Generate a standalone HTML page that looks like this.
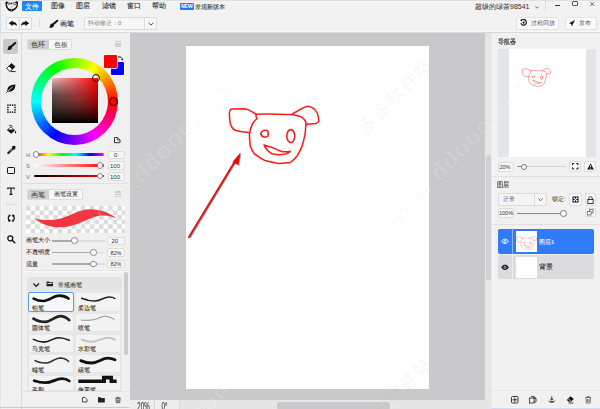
<!DOCTYPE html>
<html><head><meta charset="utf-8">
<style>
*{box-sizing:border-box;margin:0;padding:0}
html,body{width:600px;height:409px;overflow:hidden;background:#f0f0f0;font-family:"Liberation Sans",sans-serif;color:#222}
.a{position:absolute}
.t{position:absolute;font-size:7px;line-height:7px;white-space:nowrap;-webkit-text-stroke:0.08px currentColor}
.box{position:absolute;border:1px solid #dcdcdc;border-radius:2px;background:#f7f7f7}
svg{position:absolute;overflow:visible}
</style></head><body>
<!-- menubar -->
<div class="a" style="left:0;top:0;width:600px;height:33px;background:#f2f2f2;border-bottom:1px solid #d9d9d9"></div><div class="a" style="left:0;top:31px;width:600px;height:1px;background:#f8f8f8"></div>
<div class="a" style="left:0;top:0;width:600px;height:1px;background:#e2e2e2"></div>
<div class="a" style="left:22px;top:1px;width:20px;height:10px;background:#1d86f2;border-radius:1px"></div>
<div class="t" style="left:25px;top:2.5px;color:#fff">文件</div>
<div class="t" style="left:51px;top:2px">图像</div>
<div class="t" style="left:76px;top:2px">图层</div>
<div class="t" style="left:102px;top:2px">滤镜</div>
<div class="t" style="left:127px;top:2px">窗口</div>
<div class="t" style="left:152px;top:2px">帮助</div>
<div class="a" style="left:179.5px;top:3px;width:14.5px;height:7px;background:#1d7ff5;border-radius:1px"></div>
<div class="t" style="left:181px;top:4px;font-size:5px;line-height:5px;color:#fff;font-weight:bold;-webkit-text-stroke:0">NEW</div>
<div class="t" style="left:195px;top:3.9px;font-size:6px;line-height:6px;color:#333;-webkit-text-stroke:0.08px #333">发现新版本</div>
<div class="t" style="left:475px;top:3px;color:#333;-webkit-text-stroke:0.05px">超级的绿茶98541</div>
<!-- toolbar -->
<div class="box" style="left:6px;top:17px;width:25.5px;height:13px"></div>
<div class="a" style="left:18.5px;top:18px;width:1px;height:10.5px;background:#dcdcdc"></div>
<div class="a" style="left:38.5px;top:19px;width:1px;height:8px;background:#d8d8d8"></div>
<div class="t" style="left:60px;top:19.7px;-webkit-text-stroke:0.12px #222">画笔</div>
<div class="box" style="left:83.5px;top:17px;width:73px;height:12.5px"></div>
<div class="a" style="left:144px;top:18px;width:1px;height:10.5px;background:#dcdcdc"></div>
<div class="t" style="left:88px;top:20.3px;color:#777;font-size:6px;line-height:6px;-webkit-text-stroke:0">抖动修正：0</div>
<div class="box" style="left:516px;top:17.2px;width:43.2px;height:12.4px;background:#fafafa;border-color:#e2e2e2"></div>
<div class="t" style="left:530.8px;top:20.3px;color:#555;font-size:6px;line-height:6px;-webkit-text-stroke:0">过程回放</div>
<div class="box" style="left:564.7px;top:17.2px;width:32px;height:12.4px;background:#fafafa;border-color:#e2e2e2"></div>
<div class="t" style="left:578.6px;top:20.3px;color:#555;font-size:6px;line-height:6px;-webkit-text-stroke:0">发布</div>


<div class="a" style="left:0;top:0;width:1.2px;height:33px;background:linear-gradient(#cfe0ea 0%,#d8e4ea 40%,#f0c8a0 48%,#cfe0ea 55%,#cfe0ea 100%)"></div>
<!-- logo -->
<svg style="left:0;top:0" width="22" height="14" viewBox="0 0 22 14">
<path d="M6.2,2.8 C5.9,6.8 8,10 11.4,11.2 C14.9,10 17.6,6.8 17.4,2.6" stroke="#111" stroke-width="1.3" fill="none"/>
<path d="M6.8,6.2 C7.8,9.6 10,10.8 11.4,11 C13,10.8 15.6,9.6 16.6,6 C15.2,8.4 13.2,9.1 11.4,9.1 C9.5,9.1 7.9,8.3 6.8,6.2Z" fill="#111"/>
<path d="M6.2,3 C7.5,2.6 9,2.7 10.2,3.4 M12.5,3.3 C13.5,2.8 14.8,2.5 15.6,2.6" stroke="#111" stroke-width="0.8" fill="none"/>
<path d="M7.8,4.5 C8.5,4 9.5,4.3 10,4.6" stroke="#111" stroke-width="0.7" fill="none"/>
<circle cx="6.7" cy="2.6" r="1.2" fill="#111"/><circle cx="11.3" cy="3.4" r="0.95" fill="#111"/><circle cx="16.6" cy="2.4" r="1.2" fill="#111"/>
<path d="M13.6,4.6 C14.6,4.3 15.6,4.6 16.2,5.2" stroke="#222" stroke-width="0.8" fill="none"/>
<path d="M11.4,5.4 L11.4,11.6 M11.4,7.4 L13.8,5.2" stroke="#bbb" stroke-width="0.8" fill="none"/>
</svg>
<!-- undo / redo -->
<svg style="left:9px;top:20.5px" width="8" height="5" viewBox="0 0 8 5"><path d="M-0.2,2.2 L3.6,-0.5 L3.6,0.8 C6,0.8 8,2.2 8,5.2 C7,3.9 5.8,3.6 3.6,3.6 L3.6,4.9 Z" fill="#111"/></svg>
<svg style="left:20.5px;top:20.5px" width="8" height="5" viewBox="0 0 8 5"><path d="M8.2,2.2 L4.4,-0.5 L4.4,0.8 C2,0.8 0,2.2 0,5.2 C1,3.9 2.2,3.6 4.4,3.6 L4.4,4.9 Z" fill="#111"/></svg>
<!-- toolbar brush -->
<svg style="left:48.5px;top:19.5px" width="9" height="8" viewBox="0 0 9 8"><path d="M8.3,0.7 L4.4,4.1" stroke="#111" stroke-width="2" stroke-linecap="round"/><path d="M3.6,3.5 C2,3.3 1,4.4 1.1,5.8 C1,6.6 0.6,7.2 0,7.6 C2.3,8.1 4.6,7.3 5.2,5.2 Z" fill="#111"/></svg>
<!-- chevron in toolbar select -->
<svg style="left:147.5px;top:21.5px" width="6" height="4" viewBox="0 0 6 4"><path d="M0.5,0.8 L3,3 L5.5,0.8" stroke="#444" stroke-width="0.9" fill="none"/></svg>
<!-- user chevron -->
<svg style="left:534.5px;top:5.5px" width="4" height="3" viewBox="0 0 4 3"><path d="M0.3,0.5 L2,2.2 L3.7,0.5" stroke="#555" stroke-width="0.8" fill="none"/></svg>
<div class="a" style="left:545px;top:0;width:1px;height:11px;background:#dcdcdc"></div>
<!-- window controls -->
<div class="a" style="left:555.2px;top:4.6px;width:5px;height:1.2px;background:#333"></div>
<div class="a" style="left:572.2px;top:0.8px;width:5.8px;height:4.8px;border:0.9px solid #555;border-top-width:1.6px;border-radius:1px"></div>
<svg style="left:590px;top:1.6px" width="4.5" height="4.2" viewBox="0 0 5 5"><path d="M0.3,0.3 L4.7,4.7 M4.7,0.3 L0.3,4.7" stroke="#333" stroke-width="0.9"/></svg>
<!-- replay icon -->
<svg style="left:519.5px;top:19.2px" width="7" height="7" viewBox="0 0 7 7"><path d="M2,1 A2.8,2.8 0 1 1 0.9,4.2" stroke="#111" stroke-width="1.1" fill="none"/><path d="M0.2,0.4 L2.8,0.6 L1.2,2.6Z" fill="#111"/><circle cx="3.6" cy="3.6" r="1.1" fill="#111"/></svg>
<!-- publish icon -->
<svg style="left:569.2px;top:19.8px" width="6" height="6.5" viewBox="0 0 6 6.5"><path d="M6,0 L0,3.3 L2.3,3.9 L2.8,6.5 Z" fill="#111"/></svg>

<!-- left tool column -->
<div class="a" style="left:0;top:33px;width:21.5px;height:376px;background:#f0f0f0;border-right:1px solid #dcdcdc"></div>
<div class="a" style="left:0;top:33px;width:1px;height:376px;background:#e2e2e2"></div><div class="a" style="left:1px;top:33px;width:1px;height:376px;background:#f6f6f6"></div>
<div class="a" style="left:3.3px;top:39px;width:14.8px;height:15.3px;background:#c9c9c9;border-radius:2px"></div>
<div class="a" style="left:4.5px;top:204px;width:12px;height:1px;background:#dcdcdc"></div>
<svg style="left:6.7px;top:42.3px" width="9" height="8.5" viewBox="0 0 9 8"><path d="M8.3,0.7 L4.4,4.1" stroke="#111" stroke-width="2" stroke-linecap="round"/><path d="M3.6,3.5 C2,3.3 1,4.4 1.1,5.8 C1,6.6 0.6,7.2 0,7.6 C2.3,8.1 4.6,7.3 5.2,5.2 Z" fill="#111"/></svg>
<!-- eraser -->
<svg style="left:6px;top:63px" width="10" height="9.2" viewBox="0 0 10 9.2"><path d="M3,3 L5.5,0.5 L9,3.6 L6.4,6.2Z" fill="#111" stroke="#111" stroke-width="0.8" stroke-linejoin="round"/><path d="M0.7,5.4 L3,3 L6.4,6.2 L4,8.5Z" fill="#fff" stroke="#111" stroke-width="0.9" stroke-linejoin="round"/><path d="M4.6,8.6 L9.6,8.6" stroke="#111" stroke-width="0.9"/></svg>
<!-- leaf -->
<svg style="left:6.2px;top:83.5px" width="10" height="9" viewBox="0 0 10 9"><path d="M1.6,7.6 C0.4,3.8 3.6,0.6 9.4,0.6 C9.6,5.6 6,8.8 1.6,7.6Z" fill="#111"/><path d="M0.4,8.6 L6.6,2.8" stroke="#fff" stroke-width="0.8"/><path d="M0.2,8.8 L1.8,7.2" stroke="#111" stroke-width="1"/></svg>
<!-- selection -->
<svg style="left:6.5px;top:103.7px" width="9" height="9.5" viewBox="0 0 9 9.5"><g fill="#111"><rect x="0.2" y="0.4" width="1.45" height="1.45"/><rect x="0.2" y="2.75" width="1.45" height="1.45"/><rect x="0.2" y="5.1" width="1.45" height="1.45"/><rect x="0.2" y="7.45" width="1.45" height="1.45"/><rect x="2.55" y="0.4" width="1.45" height="1.45"/><rect x="2.55" y="7.45" width="1.45" height="1.45"/><rect x="4.9" y="0.4" width="1.45" height="1.45"/><rect x="4.9" y="7.45" width="1.45" height="1.45"/><rect x="7.25" y="0.4" width="1.45" height="1.45"/><rect x="7.25" y="2.75" width="1.45" height="1.45"/><rect x="7.25" y="5.1" width="1.45" height="1.45"/><rect x="7.25" y="7.45" width="1.45" height="1.45"/></g></svg>
<!-- bucket -->
<svg style="left:6px;top:124.5px" width="10.5" height="9" viewBox="0 0 10.5 9"><path d="M3.2,0.8 C4,0 5.2,0.3 6,1.2 L6.5,1.8" stroke="#111" stroke-width="0.9" fill="none"/><path d="M4.8,1.6 L9,5.3 L5.2,8.8 L0.9,5 Z" fill="#111"/><path d="M2.2,4.5 L7.5,4.5 L4.9,2.2Z" fill="#fff"/><path d="M9.3,5.5 C10.3,6.5 10.5,7.6 9.8,8.3 C9.2,8.6 8.7,8 9,7.2Z" fill="#111"/></svg>
<!-- eyedropper -->
<svg style="left:6.5px;top:145.2px" width="9" height="9" viewBox="0 0 9 9"><circle cx="7.2" cy="2.1" r="1.35" fill="#111"/><path d="M5.2,1.5 L8,4.3" stroke="#111" stroke-width="1.3"/><path d="M6.2,3.4 L1.3,8.1" stroke="#111" stroke-width="2.1" stroke-linecap="round"/><path d="M5.2,4.4 L3,6.6" stroke="#fff" stroke-width="0.7"/></svg>
<!-- rectangle -->
<div class="a" style="left:7.3px;top:166.6px;width:7.8px;height:7.8px;border:1.4px solid #111;border-radius:1.2px"></div>
<!-- text T -->
<svg style="left:7px;top:187px" width="8" height="8" viewBox="0 0 8 8"><path d="M0.5,1 L7.5,1 M4,1 L4,7.3 M2.5,7.3 L5.5,7.3 M0.8,0.4 L0.8,2.2 M7.2,0.4 L7.2,2.2" stroke="#111" stroke-width="1.2" fill="none"/></svg>
<!-- rotate -->
<svg style="left:6.7px;top:213.8px" width="8.5" height="8.2" viewBox="0 0 8.5 8.2"><path d="M2.2,6.4 C0.8,5 0.9,2.6 2.6,1.5" stroke="#111" stroke-width="1.2" fill="none"/><path d="M6.3,1.8 C7.7,3.2 7.6,5.6 5.9,6.7" stroke="#111" stroke-width="1.2" fill="none"/><path d="M1.4,0.4 L4,0.9 L2.4,3 Z M7.1,7.8 L4.5,7.3 L6.1,5.2 Z" fill="#111"/><circle cx="2.3" cy="6.6" r="1.2" fill="#111"/><circle cx="6.2" cy="1.6" r="1.2" fill="#111"/></svg>
<!-- zoom -->
<svg style="left:6.7px;top:234.6px" width="8.5" height="8.5" viewBox="0 0 8.5 8.5"><circle cx="3.3" cy="3.3" r="2.5" stroke="#111" stroke-width="1.25" fill="none"/><path d="M5.2,5.2 L7.8,7.8" stroke="#111" stroke-width="1.4" stroke-linecap="round"/></svg>


<!-- left panel -->
<div class="a" style="left:21.5px;top:33px;width:108.5px;height:376px;background:#f0f0f0"></div>
<div class="box" style="left:27px;top:38.5px;width:44.5px;height:11.5px;background:#f7f7f7"></div>
<div class="a" style="left:28px;top:39.5px;width:21px;height:9.5px;background:#d0d0d0"></div>
<div class="t" style="left:31.3px;top:40.8px;color:#333;-webkit-text-stroke:0.05px #333">色环</div>
<div class="t" style="left:53.5px;top:40.8px;color:#555;-webkit-text-stroke:0.03px #555">色板</div>
<!-- wheel -->
<div class="a" style="left:31px;top:58px;width:87px;height:87px;border-radius:50%;background:conic-gradient(from 90deg,#f00,#f0f,#00f,#0ff,#0f0,#ff0,#f00)"></div>
<div class="a" style="left:41px;top:68px;width:67px;height:67px;border-radius:50%;background:#f0f0f0"></div>
<div class="a" style="left:51.5px;top:77.5px;width:46px;height:45.5px;background:linear-gradient(to bottom,rgba(0,0,0,0) 0%,rgba(0,0,0,0.17) 25%,rgba(0,0,0,0.35) 50%,rgba(0,0,0,0.65) 75%,#000 100%),linear-gradient(to right,#f0c0c0,#f00)"></div>
<div class="a" style="left:51.5px;top:77.5px;width:46px;height:45.5px;background:linear-gradient(to right,rgba(0,0,0,0.5),rgba(0,0,0,0.1) 70%,transparent);-webkit-mask-image:linear-gradient(to bottom,transparent,#000 40%)"></div>
<div class="a" style="left:108.5px;top:96.5px;width:9px;height:9px;border-radius:50%;border:1px solid #111;background:#f00"></div>
<div class="a" style="left:92px;top:73.5px;width:8px;height:8px;border-radius:50%;border:1px solid #111"></div>
<div class="a" style="left:110.8px;top:62.2px;width:13.3px;height:12.8px;background:#0000ff;border-radius:1px;box-shadow:0 0 0 0.7px #fff"></div>
<div class="a" style="left:104.1px;top:55.3px;width:12.8px;height:12.5px;background:#f00;border-radius:1px;box-shadow:0 0 0 0.7px #fff"></div>

<svg style="left:117.8px;top:56.3px" width="5.5" height="5" viewBox="0 0 5.5 5"><path d="M0.8,1 C2.5,0.6 4,1.5 4.3,3.3" stroke="#111" stroke-width="0.9" fill="none"/><path d="M0,0.3 L1.6,0.4 L0.7,1.8Z M3.2,3 L5.3,3 L4.3,4.8Z" fill="#111"/></svg>
<div class="a" style="left:115.3px;top:40.8px;width:6.2px;height:1.5px;background:#cfcfcf"></div>
<div class="a" style="left:115.3px;top:43px;width:6.2px;height:1.5px;background:#cfcfcf"></div>
<div class="a" style="left:115.3px;top:45.3px;width:6.2px;height:1.5px;background:#cfcfcf"></div>
<div class="a" style="left:115.3px;top:191.3px;width:6.2px;height:1.4px;background:#cfcfcf"></div>
<div class="a" style="left:115.3px;top:193.5px;width:6.2px;height:1.4px;background:#cfcfcf"></div>
<div class="a" style="left:115.3px;top:195.7px;width:6.2px;height:1.4px;background:#cfcfcf"></div>
<svg style="left:114.4px;top:136.8px" width="6.5" height="6.2" viewBox="0 0 6.5 6.2"><path d="M0.5,0.5 L3.6,0.5 L6,2.9 L6,5.7 L0.5,5.7Z" stroke="#222" stroke-width="0.9" fill="none" stroke-linejoin="round"/><path d="M3.4,0.6 L3.4,3 L5.9,3" stroke="#222" stroke-width="0.7" fill="none"/></svg>
<!-- HSV sliders -->
<div class="t" style="left:26px;top:151.5px;font-size:6px;color:#777;-webkit-text-stroke:0">H</div>
<div class="t" style="left:26px;top:162.5px;font-size:6px;color:#777;-webkit-text-stroke:0">S</div>
<div class="t" style="left:26px;top:173.5px;font-size:6px;color:#777;-webkit-text-stroke:0">V</div>
<div class="a" style="left:34px;top:153px;width:70px;height:2.9px;border-radius:2px;background:linear-gradient(to right,#f00,#ff0,#0f0,#0ff,#00f,#f0f)"></div>
<div class="a" style="left:34px;top:164px;width:70px;height:2.9px;border-radius:2px;background:linear-gradient(to right,#fff,#f00)"></div>
<div class="a" style="left:34px;top:174.5px;width:70px;height:2.9px;border-radius:2px;background:linear-gradient(to right,#000,#f00)"></div>
<div class="a" style="left:33px;top:151.2px;width:6.4px;height:6.4px;border-radius:50%;background:#fff;border:1px solid #888"></div>
<div class="a" style="left:96.5px;top:162.3px;width:6.4px;height:6.4px;border-radius:50%;background:#fff;border:1px solid #888"></div>
<div class="a" style="left:96.5px;top:172.7px;width:6.4px;height:6.4px;border-radius:50%;background:#fff;border:1px solid #888"></div>
<div class="box" style="left:107.5px;top:150.5px;width:17px;height:8.5px"></div>
<div class="box" style="left:107.5px;top:161px;width:17px;height:8.5px"></div>
<div class="box" style="left:107.5px;top:172px;width:17px;height:8.5px"></div>
<div class="t" style="left:114px;top:152px;font-size:6px;line-height:6px;color:#333;-webkit-text-stroke:0">0</div>
<div class="t" style="left:110px;top:162.5px;font-size:6px;line-height:6px;color:#333;-webkit-text-stroke:0">100</div>
<div class="t" style="left:110px;top:173.5px;font-size:6px;line-height:6px;color:#333;-webkit-text-stroke:0">100</div>
<div class="a" style="left:21.5px;top:183px;width:106px;height:1px;background:#e0e0e0"></div>
<!-- brush tabs -->
<div class="box" style="left:27px;top:188.5px;width:55.5px;height:11.5px;background:#f7f7f7"></div>
<div class="a" style="left:28px;top:189.5px;width:21px;height:9.5px;background:#d0d0d0"></div>
<div class="t" style="left:31.3px;top:190.8px;color:#333;-webkit-text-stroke:0.05px #333">画笔</div>
<div class="t" style="left:53.5px;top:190.8px;color:#444;font-size:6px;line-height:7px;-webkit-text-stroke:0.05px #444">画笔设置</div>
<!-- checker -->
<div class="a" style="left:25.7px;top:205.5px;width:99px;height:27.4px;background-color:#fff;background-image:conic-gradient(#fff 25%,#dcdcdc 25%,#dcdcdc 50%,#fff 50%,#fff 75%,#dcdcdc 75%);background-size:9.14px 9.14px"></div>

<svg style="left:0;top:0" width="600" height="409" viewBox="0 0 600 409">
<path d="M34.3,218.5 C45,220.5 52,220.8 62,218.2 C72,215 80,209.5 90,209.3 C100,209.1 110,213 116.8,218.6 C110,215.8 104,214.8 98,216 C88,218.5 80,224 68,226.5 C55,229 44,226 34.3,218.5 Z" fill="#f23640"/>
</svg>
<div class="t" style="left:26px;top:237.4px;font-size:6.2px;line-height:6.2px;color:#333;-webkit-text-stroke:0.08px #333">画笔大小</div>
<div class="t" style="left:26px;top:249px;font-size:6.2px;line-height:6.2px;color:#333;-webkit-text-stroke:0.08px #333">不透明度</div>
<div class="t" style="left:26px;top:261.0px;font-size:6.2px;line-height:6.2px;color:#333;-webkit-text-stroke:0.08px #333">流量</div>
<div class="a" style="left:51.5px;top:240px;width:53.5px;height:1.5px;background:linear-gradient(to right,#aaa 42%,#ddd 42%)"></div>
<div class="a" style="left:51.5px;top:251.5px;width:53.5px;height:1.5px;background:linear-gradient(to right,#aaa 78%,#ddd 78%)"></div>
<div class="a" style="left:51.5px;top:263px;width:53.5px;height:1.5px;background:linear-gradient(to right,#aaa 78%,#ddd 78%)"></div>
<div class="a" style="left:71px;top:237.2px;width:6.5px;height:6.5px;border-radius:50%;background:#fff;border:1px solid #888"></div>
<div class="a" style="left:90px;top:249px;width:6.5px;height:6.5px;border-radius:50%;background:#fff;border:1px solid #888"></div>
<div class="a" style="left:90px;top:260.5px;width:6.5px;height:6.5px;border-radius:50%;background:#fff;border:1px solid #888"></div>
<div class="box" style="left:107px;top:236.5px;width:17.5px;height:8.5px"></div>
<div class="box" style="left:107px;top:248px;width:17.5px;height:8.5px"></div>
<div class="box" style="left:107px;top:259.5px;width:17.5px;height:8.5px"></div>
<div class="t" style="left:111.5px;top:238px;font-size:6px;line-height:6px;color:#333;-webkit-text-stroke:0">20</div>
<div class="t" style="left:110.5px;top:249.5px;font-size:5.5px;line-height:6px;color:#333;-webkit-text-stroke:0">82%</div>
<div class="t" style="left:110.5px;top:261px;font-size:5.5px;line-height:6px;color:#333;-webkit-text-stroke:0">82%</div>
<div class="a" style="left:21.5px;top:270px;width:106px;height:1px;background:#e4e4e4"></div><div class="a" style="left:21.5px;top:271px;width:106px;height:1px;background:#f8f8f8"></div>


<!-- brush library -->
<div class="a" style="left:21.5px;top:271px;width:108.5px;height:120px;overflow:hidden">
 <div class="a" style="left:5.4px;top:6.2px;width:95.1px;height:14px;background:#e4e4e4;border-radius:2px 2px 0 0"></div>
 <div class="a" style="left:5.4px;top:20.2px;width:95.1px;height:110px;background:#e8e8e8"></div>
</div>
<svg style="left:32.7px;top:282.5px" width="6.5" height="4" viewBox="0 0 6.5 4"><path d="M0.5,0.5 L3.25,3.3 L6,0.5" stroke="#111" stroke-width="1.2" fill="none"/></svg>
<svg style="left:46.2px;top:281.3px" width="7.5" height="5.8" viewBox="0 0 7.5 5.8"><path d="M0.5,0.5 L2.8,0.5 L3.5,1.3 L7,1.3 L7,5.3 L0.5,5.3Z" fill="#222"/><path d="M1.3,2.5 L6.2,2.5" stroke="#fff" stroke-width="0.8"/></svg>
<div class="t" style="left:58px;top:281.7px;font-size:6.1px;line-height:6.1px;color:#333;-webkit-text-stroke:0.05px #333">常规画笔</div>
<div class="a" style="left:28.3px;top:292.4px;width:46px;height:19.3px;border:1px solid #5b9af0;background:#f6f8fc;border-radius:2px;overflow:hidden"></div>
<div class="t" style="left:31.8px;top:304.7px;font-size:6px;line-height:6px;color:#333;-webkit-text-stroke:0.1px #333">铅笔</div>
<div class="a" style="left:74.9px;top:292.4px;width:46px;height:19.3px;border:1px solid #e6e6e6;background:#f3f3f3;border-radius:2px;overflow:hidden"></div>
<div class="t" style="left:78.2px;top:304.7px;font-size:6px;line-height:6px;color:#333;-webkit-text-stroke:0.1px #333">柔边笔</div>
<div class="a" style="left:28.3px;top:313px;width:46px;height:19.3px;border:1px solid #e6e6e6;background:#f3f3f3;border-radius:2px;overflow:hidden"></div>
<div class="t" style="left:31.8px;top:325.3px;font-size:6px;line-height:6px;color:#333;-webkit-text-stroke:0.1px #333">圆体笔</div>
<div class="a" style="left:74.9px;top:313px;width:46px;height:19.3px;border:1px solid #e6e6e6;background:#f3f3f3;border-radius:2px;overflow:hidden"></div>
<div class="t" style="left:78.2px;top:325.3px;font-size:6px;line-height:6px;color:#333;-webkit-text-stroke:0.1px #333">喷笔</div>
<div class="a" style="left:28.3px;top:333.5px;width:46px;height:19.3px;border:1px solid #e6e6e6;background:#f3f3f3;border-radius:2px;overflow:hidden"></div>
<div class="t" style="left:31.8px;top:345.8px;font-size:6px;line-height:6px;color:#333;-webkit-text-stroke:0.1px #333">马克笔</div>
<div class="a" style="left:74.9px;top:333.5px;width:46px;height:19.3px;border:1px solid #e6e6e6;background:#f3f3f3;border-radius:2px;overflow:hidden"></div>
<div class="t" style="left:78.2px;top:345.8px;font-size:6px;line-height:6px;color:#333;-webkit-text-stroke:0.1px #333">水彩笔</div>
<div class="a" style="left:28.3px;top:354.2px;width:46px;height:19.3px;border:1px solid #e6e6e6;background:#f3f3f3;border-radius:2px;overflow:hidden"></div>
<div class="t" style="left:31.8px;top:366.5px;font-size:6px;line-height:6px;color:#333;-webkit-text-stroke:0.1px #333">蜡笔</div>
<div class="a" style="left:74.9px;top:354.2px;width:46px;height:19.3px;border:1px solid #e6e6e6;background:#f3f3f3;border-radius:2px;overflow:hidden"></div>
<div class="t" style="left:78.2px;top:366.5px;font-size:6px;line-height:6px;color:#333;-webkit-text-stroke:0.1px #333">碳笔</div>
<div class="a" style="left:28.3px;top:374.9px;width:46px;height:16.1px;border:1px solid #e6e6e6;background:#f3f3f3;border-radius:2px;overflow:hidden"></div>
<div class="t" style="left:31.8px;top:387.2px;font-size:6px;line-height:6px;color:#333;-webkit-text-stroke:0.1px #333">毛刷</div>
<div class="a" style="left:74.9px;top:374.9px;width:46px;height:16.1px;border:1px solid #e6e6e6;background:#f3f3f3;border-radius:2px;overflow:hidden"></div>
<div class="t" style="left:78.2px;top:387.2px;font-size:6px;line-height:6px;color:#333;-webkit-text-stroke:0.1px #333">像素笔</div>
<svg style="left:0;top:0" width="600" height="409" viewBox="0 0 600 409">
<defs><clipPath id="libclip"><rect x="21.5" y="271" width="108.5" height="120"/></clipPath></defs>
<g clip-path="url(#libclip)" fill="none" stroke-linecap="round">
<path d="M33.6,298.6 C37,300.5 40,301 43.6,301 C49,301 53,295.8 58.7,295.6 C63,295.5 66.5,297 68.5,298.6" stroke="#111" stroke-width="2.6"/>
<path d="M81.6,298.2 C86,300 90,301.1 94.6,301.1 C100,301.1 104,296.9 109.3,296.9 C112,296.9 113.5,297.5 115,298.5" stroke="#222" stroke-width="1.5"/>
<path d="M33.4,318.6 C37,321 41,321.9 45.6,321.9 C51,321.9 55,316.1 60.3,316.1 C64,316.1 67,318 69.3,320.2" stroke="#222" stroke-width="2.6"/>
<path d="M81.6,320.2 C86,320.5 90,320.4 94.6,319.5 C99,318.6 101,316.6 104.4,316.3 C108,316.4 111,317.5 114.2,319.4" stroke="#888" stroke-width="0.9" stroke-dasharray="0.7 0.5"/>
<path d="M33.4,339.4 C37,341.2 40,342.1 44,342.1 C50,342.1 53,337.7 58.7,337.7 C63,337.7 66,338.8 69.3,340.2" stroke="#1a1a1a" stroke-width="1.6"/>
<path d="M81.6,339.8 C85,341 88,341.8 91.4,341.8 C98,341.8 102,337.7 107.7,337.7 C111,337.7 113,338.5 115,339.8" stroke="#c4c4c4" stroke-width="2"/>
<path d="M35,360.6 C38,362 41.5,363 45.6,363 C51,363 55,358.1 60.3,358.1 C64,358.1 66.5,359.5 68.5,361.4" stroke="#333" stroke-width="1.6" stroke-dasharray="1.2 0.4"/>
<path d="M80.7,360.6 C84,362 87.5,363 91.4,363 C98,363 102,358.1 107.7,358.1 C111,358.1 113,358.8 115,359.8" stroke="#111" stroke-width="2.8"/>
<path d="M34.2,380.7 C38,382 41.5,382.7 45.6,382.7 C52,382.7 56,378.6 62,378.6 C65.5,378.6 67.5,379.6 69.3,381" stroke="#111" stroke-width="2.8"/>
<path d="M78.3,379.4 L102,379.4 L102,375.8 L113,375.8 L113,379.4 L116.7,379.4 L116.7,383 L109.5,383 L109.5,379.4 L106,379.4 L106,383 L78.3,383Z" fill="#111" stroke="none"/>
</g>
</svg>
<!-- scrollbar -->
<div class="a" style="left:124.1px;top:272.3px;width:4.3px;height:82.7px;background:#cbcbcb;border-radius:2.2px"></div>
<div class="a" style="left:21.5px;top:391px;width:108.5px;height:16px;background:#f0f0f0;border-top:1px solid #e2e2e2"></div>
<div class="a" style="left:0;top:407px;width:130px;height:1px;background:#f4b8b8"></div>
<!-- bottom icons -->
<svg style="left:81.5px;top:396.7px" width="5.5" height="5.5" viewBox="0 0 5.5 5.5"><path d="M0.5,0.5 L3,0.5 L5,2.5 L5,5 L0.5,5Z" stroke="#222" stroke-width="0.8" fill="none"/></svg>
<svg style="left:98.3px;top:396.7px" width="6.8" height="5.5" viewBox="0 0 6.8 5.5"><path d="M0,0.2 L2.5,0.2 L3.2,1 L6.8,1 L6.8,5.5 L0,5.5Z" fill="#222"/></svg>
<svg style="left:115.3px;top:396.5px" width="6" height="6" viewBox="0 0 6 6"><path d="M0.3,1.2 L5.7,1.2 M2,1.2 L2,0.4 L4,0.4 L4,1.2 M1,1.5 L1.3,5.6 L4.7,5.6 L5,1.5 M2.3,2.5 L2.3,4.7 M3.7,2.5 L3.7,4.7" stroke="#222" stroke-width="0.7" fill="none"/></svg>

<!-- canvas area -->
<div class="a" style="left:130px;top:33px;width:355px;height:367px;background:#c9c9cb"></div>
<div class="a" style="left:186px;top:45.5px;width:243.3px;height:343.2px;background:#fff"></div>
<div class="a" style="left:485px;top:33px;width:7px;height:376px;background:#e6e6e6"></div>
<div class="a" style="left:485.8px;top:155.3px;width:5.1px;height:124.5px;background:#d1d1d3;border-radius:2.5px"></div>
<div class="a" style="left:130px;top:400px;width:355px;height:9px;background:#e6e6e6"></div>
<div class="a" style="left:130px;top:400px;width:50px;height:9px;background:#ededed"></div>
<div class="a" style="left:154px;top:401px;width:1px;height:8px;background:#d6d6d6"></div>
<div class="a" style="left:179px;top:401px;width:1px;height:8px;background:#d6d6d6"></div>
<div class="a" style="left:277px;top:401.5px;width:112.5px;height:8px;background:#c9c9cb;border-radius:3px"></div>
<div class="t" style="left:137.3px;top:399.5px;font-size:6.2px;line-height:7px;color:#444;transform:scaleY(1.65);transform-origin:0 0;-webkit-text-stroke:0.1px #444">20%</div>
<div class="t" style="left:161.5px;top:399.5px;font-size:6.2px;line-height:7px;color:#444;transform:scaleY(1.65);transform-origin:0 0;-webkit-text-stroke:0.1px #444">0°</div>


<svg style="left:0;top:0" width="600" height="409" viewBox="0 0 600 409">
<defs>
<g id="face" fill="none" stroke="#fa1c1c" stroke-width="1.55" stroke-linejoin="round" stroke-linecap="round">
<path d="M256.2,114.4 C252,111.5 248,109 244.5,108.7 L231,109.1 C229.5,110 229.2,112 229.4,114.6 C229.6,118.5 229.8,122 230.8,125.3 C232,128 233.5,129.8 235.7,130.6 C239.5,131.8 244,132.4 249.4,132.6"/>
<path d="M256.2,114.2 C263,114 270,114 276.8,114.2 C282,114.3 287,114.4 292.4,114.6 C296,115.3 299.5,116 302.2,117.5 C304,119 305.5,120.5 306.1,122.4 C305.8,126 305.5,130 305.1,134.1 C304.3,138 303.3,142 302.2,145.9 C300.8,149.5 299,152.8 297.3,155.7 C295,158.5 292.8,160.8 290.5,162.5 C286.5,163 282.5,163.3 278.7,163.5 C274,162.8 269.5,162 265,160.6 C261,158.5 257,156 254.2,153.7 C252.5,151 251.2,148.5 250.3,145.9 C249.8,142 249.5,138 249.4,134.1 C250,130.5 251,127.5 252.3,124.4 C253.5,122 255.2,120 257.2,118.5 C256.2,117.5 255.5,116.5 256.2,114.2"/>
<path d="M291.4,114.6 C293.5,113 296,111.8 298.3,110.7 C301.5,108.5 305,106.6 308.1,106.2 C310.5,106.5 312.5,107.5 313.9,108.7 C316,110.6 317.2,112.5 317.8,114.6 C318.4,117 318.8,119.3 318.8,121.4 C318,122.6 317,123 315.9,123.4 C312.5,123.8 309,124.1 306.1,124.4"/>
<path d="M260.6,133.4 C262,131.2 263.5,130.3 264.5,130.2 C266,130.1 267.3,130.5 268,131.2 C268.3,132.8 268.3,134.5 268,136.1 C266.8,136.9 265.5,137.2 264,137.1 C262.5,136.8 261.5,136 260.6,133.4Z"/>
<ellipse cx="290.8" cy="136.1" rx="4" ry="6.5"/>
<path d="M264,144.9 C267,146 270,147 272.8,147.8 C276,149.3 279.5,151 282.6,151.8 C285.5,151.9 288,151.7 290.4,151.4 C289,152.6 287.8,153.3 286.5,153.7 C284,154.3 281.5,154.7 278.7,154.7 C276.3,154.5 274,154.2 271.9,153.7 C270,152.7 268.3,151.4 267,149.8 C265.8,148.2 264.8,146.6 264,144.9Z"/>
</g>
</defs>
<use href="#face"/>
<path d="M189,237.2 L236,159.5" stroke="#444" stroke-width="1.6" opacity="0.6" transform="translate(0.9,0.6)"/>
<path d="M232.5,162.8 L240.6,152.6 L238.4,165.3 Z" fill="#555" opacity="0.55" transform="translate(0.9,0.6)"/>
<path d="M188.8,237.2 L236,159.5" stroke="#e80c0c" stroke-width="1.7" stroke-linecap="round"/>
<path d="M232.3,162.3 L240.6,152.6 L238.4,164.8 Z" fill="#e30d0d"/>
</svg>




<!-- right panel -->
<div class="a" style="left:492px;top:33px;width:108px;height:376px;background:#f1f1f1;border-left:1px solid #f7f7f7"></div>
<div class="t" style="left:497.6px;top:37.8px;font-size:6px;line-height:6px;transform:scaleY(1.17);transform-origin:0 0;-webkit-text-stroke:0.1px #222">导航器</div>
<div class="a" style="left:498px;top:49px;width:97.5px;height:107.5px;background:#e4e5e8"></div>
<div class="a" style="left:508.5px;top:49px;width:77px;height:107.5px;background:#fff"></div>
<div class="a" style="left:492px;top:175.5px;width:108px;height:1px;background:#e0e0e0"></div>
<div class="t" style="left:497.3px;top:181.3px;font-size:6px;line-height:6px;transform:scaleY(1.15);transform-origin:0 0;color:#333;-webkit-text-stroke:0.08px #333">图层</div>
<div class="a" style="left:492px;top:223.5px;width:108px;height:1px;background:#e0e0e0"></div>
<div class="a" style="left:497.8px;top:229.2px;width:96.5px;height:24.5px;background:#2f7cf6;border-radius:2px"></div>
<div class="a" style="left:497.8px;top:255.2px;width:96.5px;height:24px;background:#dcdcdf;border-radius:2px"></div>
<div class="a" style="left:515.8px;top:231px;width:21.2px;height:21px;background:#fff"></div>
<div class="a" style="left:515.8px;top:257px;width:21.2px;height:21px;background:#fff"></div>

<svg style="left:0;top:0" width="600" height="409" viewBox="0 0 600 409">
<g transform="translate(508.6,49) scale(0.3156) translate(-186,-45.5)" opacity="0.85"><use href="#face" stroke-width="4.2"/></g>
</svg>
<svg style="left:515.8px;top:231px" width="21.2" height="21" viewBox="0 0 21.2 21">
<g transform="translate(0.1,5.2) scale(0.231) translate(-229,-106)" opacity="0.7"><use href="#face" stroke-width="4"/></g>
</svg>
<div class="t" style="left:538.9px;top:238.8px;color:#fff;font-size:6.2px;line-height:6.2px;-webkit-text-stroke:0.05px #fff">图层1</div>
<div class="t" style="left:538.9px;top:264.2px;font-size:6.5px;line-height:6.5px;-webkit-text-stroke:0.08px #222">背景</div>
<div class="a" style="left:492px;top:390px;width:108px;height:1px;background:#e8e8e8"></div>
<!-- nav controls -->
<div class="box" style="left:497.8px;top:162.4px;width:16.7px;height:9.4px;background:#f8f8f8"></div>
<div class="t" style="left:499.5px;top:164.6px;font-size:5.5px;line-height:5.5px;color:#333;-webkit-text-stroke:0">20%</div>
<div class="a" style="left:517.4px;top:166.3px;width:49px;height:1px;background:#d0d0d0"></div>
<div class="a" style="left:517.4px;top:166.3px;width:6px;height:1px;background:#888"></div>
<div class="a" style="left:520.6px;top:163.5px;width:6.6px;height:6.6px;border-radius:50%;background:#fff;border:1px solid #777"></div>
<div class="box" style="left:569.3px;top:160.5px;width:11.7px;height:11.8px;background:#f8f8f8"></div>
<div class="box" style="left:584px;top:160.5px;width:11.7px;height:11.8px;background:#f8f8f8"></div>
<svg style="left:572px;top:163px" width="6.5" height="6.5" viewBox="0 0 6.5 6.5"><path d="M0.5,2.2 L0.5,0.5 L2.2,0.5 M4.3,0.5 L6,0.5 L6,2.2 M6,4.3 L6,6 L4.3,6 M2.2,6 L0.5,6 L0.5,4.3" stroke="#111" stroke-width="1" fill="none"/></svg>
<svg style="left:586.5px;top:162.8px" width="7" height="7" viewBox="0 0 7 7"><path d="M3.5,0.3 L6.8,6.5 L0.2,6.5Z" fill="#111"/><path d="M3.5,2.2 L3.5,4.5 M3.5,5.2 L3.5,5.9" stroke="#fff" stroke-width="0.8"/></svg>
<!-- layer controls -->
<div class="box" style="left:497.8px;top:193.2px;width:49px;height:12.4px;background:#f5f5f5"></div>
<div class="a" style="left:534px;top:194.2px;width:1px;height:10.4px;background:#dcdcdc"></div>
<div class="t" style="left:503px;top:196.3px;font-size:6px;line-height:6px;color:#555;-webkit-text-stroke:0.03px #555">正常</div>
<svg style="left:537.5px;top:197.5px" width="5" height="3.5" viewBox="0 0 5 3.5"><path d="M0.4,0.5 L2.5,2.8 L4.6,0.5" stroke="#444" stroke-width="0.8" fill="none"/></svg>
<div class="t" style="left:552px;top:196.3px;font-size:6px;line-height:6px;color:#444;-webkit-text-stroke:0.05px #444">锁定:</div>
<div class="box" style="left:569.3px;top:193.2px;width:12.3px;height:12.4px;background:#f8f8f8"></div>
<div class="box" style="left:585px;top:193.2px;width:10.7px;height:12.4px;background:#f8f8f8"></div>
<svg style="left:572px;top:196px" width="7" height="7" viewBox="0 0 7 7"><rect x="0.5" y="0.5" width="6" height="6" fill="#111"/><rect x="1.5" y="1.5" width="1.5" height="1.5" fill="#fff"/><rect x="4" y="1.5" width="1.5" height="1.5" fill="#fff"/><rect x="1.5" y="4" width="1.5" height="1.5" fill="#fff"/><rect x="4" y="4" width="1.5" height="1.5" fill="#fff"/><rect x="2.75" y="2.75" width="1.5" height="1.5" fill="#fff"/></svg>
<svg style="left:587px;top:195.5px" width="7" height="8" viewBox="0 0 7 8"><path d="M1.8,3.5 L1.8,2.2 C1.8,0.2 5.2,0.2 5.2,2.2 L5.2,3.5" stroke="#222" stroke-width="0.9" fill="none"/><rect x="0.8" y="3.5" width="5.4" height="4" stroke="#222" stroke-width="0.9" fill="none"/></svg>
<div class="box" style="left:497.8px;top:208.4px;width:16.7px;height:9.6px;background:#f8f8f8"></div>
<div class="t" style="left:499px;top:210.8px;font-size:5.5px;line-height:5.5px;color:#333;-webkit-text-stroke:0">100%</div>
<div class="a" style="left:517.4px;top:212.9px;width:47px;height:1px;background:#888"></div>
<div class="a" style="left:560px;top:210px;width:6.8px;height:6.8px;border-radius:50%;background:#fff;border:1px solid #777"></div>
<div class="box" style="left:584.5px;top:207.5px;width:11.2px;height:9.8px;background:#f8f8f8"></div>
<svg style="left:587px;top:209px" width="6.5" height="6.5" viewBox="0 0 6.5 6.5"><rect x="2.5" y="0.5" width="3.5" height="3.5" stroke="#666" stroke-width="0.8" fill="none"/><rect x="0.5" y="2.5" width="3.5" height="3.5" stroke="#666" stroke-width="0.8" fill="#f8f8f8"/></svg>
<!-- eye icons -->
<div class="a" style="left:511.8px;top:229.2px;width:1.6px;height:24.5px;background:#8db7f9"></div>
<div class="a" style="left:511.8px;top:255.2px;width:1.6px;height:24px;background:#ececee"></div>
<svg style="left:501.2px;top:239.2px" width="8" height="4.6" viewBox="0 0 8 4.6"><path d="M0.7,2.3 C2,-0.6 6,-0.6 7.3,2.3 C6,5.2 2,5.2 0.7,2.3Z" fill="none" stroke="#fff" stroke-width="0.9"/><circle cx="4" cy="2.3" r="1.1" fill="none" stroke="#fff" stroke-width="0.8"/></svg>
<svg style="left:501.2px;top:264.6px" width="8" height="4.6" viewBox="0 0 8 4.6"><path d="M0.7,2.3 C2,-0.6 6,-0.6 7.3,2.3 C6,5.2 2,5.2 0.7,2.3Z" fill="#222" stroke="#111" stroke-width="0.9"/><circle cx="4" cy="2.3" r="1.1" fill="none" stroke="#dcdcdf" stroke-width="0.7"/></svg>
<!-- bottom icons right -->
<svg style="left:510.5px;top:395.8px" width="7.5" height="7.5" viewBox="0 0 7.5 7.5"><rect x="0.5" y="0.5" width="6.5" height="6.5" rx="1" stroke="#222" stroke-width="0.9" fill="none"/><path d="M3.75,1.5 L3.75,6 M1.5,3.75 L6,3.75" stroke="#222" stroke-width="0.9"/></svg>
<svg style="left:529.3px;top:395.8px" width="7.5" height="7.5" viewBox="0 0 7.5 7.5"><rect x="0.5" y="2" width="4.5" height="5" stroke="#222" stroke-width="0.8" fill="none"/><path d="M2,0.5 L5,0.5 L7,2.5 L7,6 L5,6 M5,0.5 L5,2.5 L7,2.5" stroke="#222" stroke-width="0.8" fill="none"/></svg>
<svg style="left:548px;top:395.8px" width="7.5" height="7.5" viewBox="0 0 7.5 7.5"><path d="M3.75,0.3 L3.75,4 M2.2,2.7 L3.75,4.3 L5.3,2.7" stroke="#222" stroke-width="0.9" fill="none"/><path d="M0.8,4.5 C0.8,7 6.7,7 6.7,4.5 M2,5.6 L5.5,5.6" stroke="#222" stroke-width="0.8" fill="none"/></svg>
<svg style="left:566.3px;top:395.8px" width="8" height="7.5" viewBox="0 0 8 7.5"><path d="M4.5,0.3 L7.8,3 L5,5.8 L2.8,5.8 L0.8,4 Z" fill="#111"/><path d="M2.2,2.8 L5.2,5.3" stroke="#fff" stroke-width="0.7"/><path d="M2.5,7 L7.5,7" stroke="#111" stroke-width="0.8"/></svg>
<svg style="left:585px;top:395.8px" width="6.5" height="7.5" viewBox="0 0 6.5 7.5"><path d="M0.3,1.5 L6.2,1.5 M2.2,1.5 L2.2,0.5 L4.3,0.5 L4.3,1.5 M1,2 L1.3,7 L5.2,7 L5.5,2 M2.5,3 L2.5,6 M4,3 L4,6" stroke="#444" stroke-width="0.7" fill="none"/></svg>
<div class="a" style="left:492px;top:407.5px;width:108px;height:1.5px;background:#d0dcf0"></div>

<svg style="left:0;top:0" width="600" height="409" viewBox="0 0 600 409">
<g font-family="Liberation Sans, sans-serif" font-weight="bold" fill="rgba(255,255,255,0.15)" stroke="rgba(0,0,0,0.04)" stroke-width="0.9">
<text x="0" y="0" font-size="24" letter-spacing="1.2" transform="translate(95.5,232.4) rotate(-46)">www.ddooo.com</text>
<text x="0" y="0" font-size="24" letter-spacing="1.2" transform="translate(393.5,230.5) rotate(-46)">www.ddooo.com</text>
<text x="0" y="0" font-size="24" letter-spacing="1.2" transform="translate(92.5,534) rotate(-46)">www.ddooo.com</text>
<text x="0" y="0" font-size="17" font-weight="normal" letter-spacing="2.5" transform="translate(366,134) rotate(-46)">多多软件站</text>
<text x="0" y="0" font-size="17" font-weight="normal" letter-spacing="2.5" transform="translate(366,433) rotate(-46)">多多软件站</text>
</g>
</svg>
</body></html>
